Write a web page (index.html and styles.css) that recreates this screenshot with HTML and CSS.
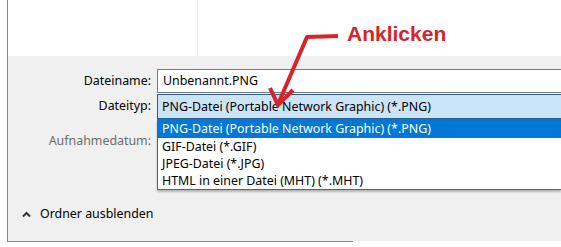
FILE: index.html
```html
<!DOCTYPE html>
<html>
<head>
    <title>Speichern unter</title>
    <link rel="stylesheet" href="styles.css">
</head>
<body>
    <div class="window">
        <div class="top">
            <div class="split"></div>
        </div>
        <div class="panel">
            <div class="row">
                <label class="label">Dateiname:</label>
                <div class="field">Unbenannt.PNG</div>
            </div>
            <div class="row">
                <label class="label">Dateityp:</label>
                <div class="field select">
                    PNG-Datei (Portable Network Graphic) (*.PNG)
                    <ul class="list">
                        <li class="selected">PNG-Datei (Portable Network Graphic) (*.PNG)</li>
                        <li>GIF-Datei (*.GIF)</li>
                        <li>JPEG-Datei (*.JPG)</li>
                        <li>HTML in einer Datei (MHT) (*.MHT)</li>
                    </ul>
                </div>
            </div>
            <div class="row meta">
                <label class="label muted">Aufnahmedatum:</label>
            </div>
            <div class="toggle">
                <svg width="9" height="8" viewBox="0 0 9 8">
                    <polyline points="1,6.5 4.5,3 8,6.5" fill="none" stroke="#333" stroke-width="2"/>
                </svg>
                <span>Ordner ausblenden</span>
            </div>
        </div>
    </div>
    <div class="edge"></div>

    <!-- annotation -->
    <svg class="arrow" width="561" height="247">
        <polyline points="338,36 307,37 279,102" fill="none" stroke="#d8232a" stroke-width="4" stroke-linejoin="round"/>
        <polyline points="270,88 278,105 293,90" fill="none" stroke="#d8232a" stroke-width="4" stroke-linejoin="miter"/>
    </svg>
    <div class="note">Anklicken</div>
</body>
</html>
```
FILE: styles.css
```css
body {
    margin: 0;
    width: 561px;
    height: 247px;
    overflow: hidden;
    background-color: white;
    font-family: "Noto Sans", "Open Sans", sans-serif;
    font-size: 12.4px;
    color: #000;
    position: relative;
}
.window {
    margin-left: 7px;
    border-left: 1px solid #6f8fb0;
    height: 241px;
    display: flex;
    flex-direction: column;
}
.top {
    height: 56px;
    background-color: white;
    display: flex;
}
.split {
    width: 189px;
    border-right: 1px solid #ececec;
}
.panel {
    flex: 1;
    background-color: #f0f0f0;
    padding-top: 13px;
}
.row {
    display: flex;
    align-items: center;
    gap: 6px;
}
.label {
    width: 143px;
    text-align: right;
    line-height: 16px;
}
.muted {
    color: #6d6d6d;
}
.field {
    position: relative;
    flex: 1;
    height: 22px;
    line-height: 22px;
    padding-left: 5px;
    background-color: white;
    border: 1px solid #7a7a7a;
    border-right: none;
    white-space: nowrap;
}
.select {
    margin-top: 1px;
    height: 23px;
    line-height: 23px;
    padding-left: 4px;
    background-color: #cce4f7;
    border-color: #2f5f8f;
}
.list {
    position: absolute;
    left: -1px;
    right: 0;
    top: 24px;
    margin: 0;
    padding: 0;
    list-style: none;
    background-color: white;
    border: 1px solid #3c6a92;
    border-right: none;
    box-shadow: 0 2px 2px rgba(0, 0, 0, 0.25);
}
.list li {
    height: 17px;
    line-height: 17px;
    padding-left: 4px;
}
.list li.selected {
    height: 18px;
    line-height: 18px;
    background-color: #0078d7;
    color: white;
}
.meta {
    height: 40px;
    align-items: flex-start;
    padding-top: 14px;
}
.toggle {
    margin-top: 33px;
    padding-left: 14px;
    display: flex;
    align-items: center;
    gap: 9px;
    line-height: 16px;
}
.edge {
    margin-left: 7px;
    width: 346px;
    border-top: 1px solid #6f8fb0;
}
.arrow {
    position: absolute;
    left: 0;
    top: 0;
}
.note {
    position: absolute;
    left: 347px;
    top: 22px;
    font-family: "Liberation Sans", Arial, sans-serif;
    font-weight: bold;
    font-size: 21px;
    color: #d8232a;
}
```
